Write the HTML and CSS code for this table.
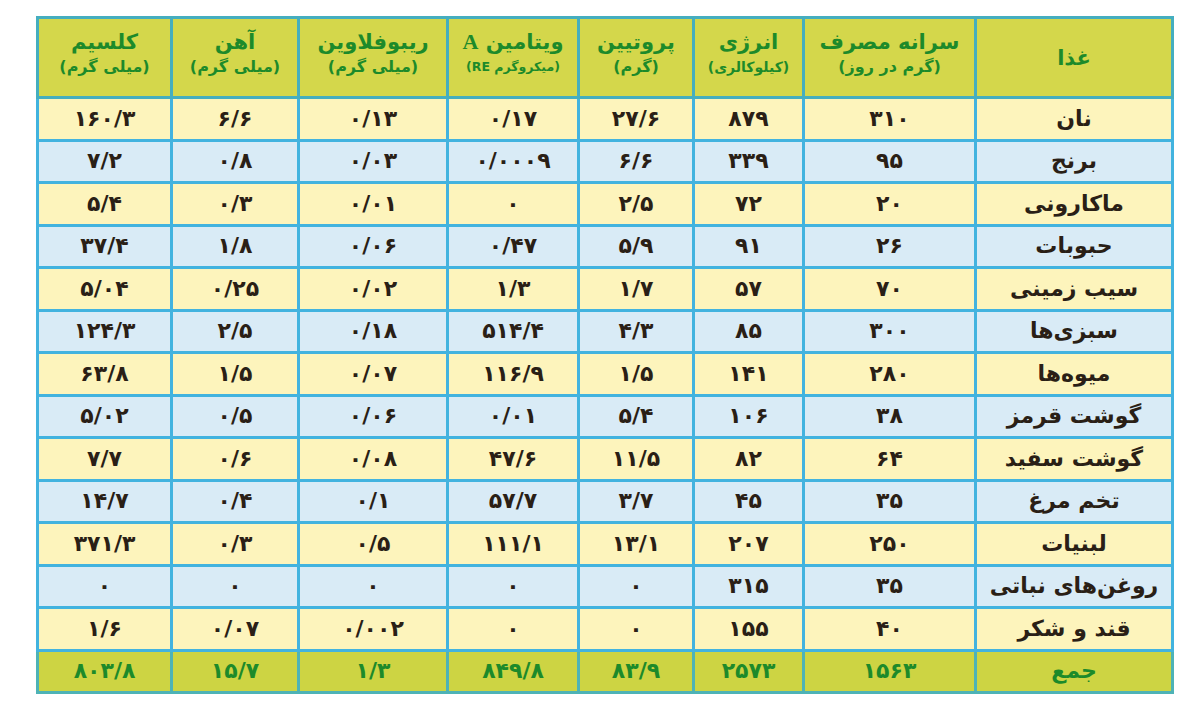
FILE: index.html
```html
<!DOCTYPE html>
<html lang="fa" dir="rtl">
<head>
<meta charset="utf-8">
<title>جدول ارزش غذایی</title>
<link rel="stylesheet" href="styles.css">
</head>
<body>
<div class="page">
<table class="nutri">
  <colgroup>
    <col class="c-food"><col class="c-use"><col class="c-energy"><col class="c-protein"><col class="c-vita"><col class="c-ribo"><col class="c-iron"><col class="c-calc">
  </colgroup>
  <thead>
    <tr class="head">
      <th><span class="t">غذا</span></th>
      <th><span class="t">سرانه مصرف</span><span class="s">(گرم در روز)</span></th>
      <th><span class="t">انرژی</span><span class="s xs">(کیلوکالری)</span></th>
      <th><span class="t">پروتیین</span><span class="s">(گرم)</span></th>
      <th><span class="t">ویتامین <span class="latin">A</span></span><span class="s xxs">(میکروگرم RE)</span></th>
      <th><span class="t">ریبوفلاوین</span><span class="s">(میلی گرم)</span></th>
      <th><span class="t">آهن</span><span class="s">(میلی گرم)</span></th>
      <th><span class="t">کلسیم</span><span class="s">(میلی گرم)</span></th>
    </tr>
  </thead>
  <tbody>
    <tr class="y"><td>نان</td><td>۳۱۰</td><td>۸۷۹</td><td>۲۷/۶</td><td>۰/۱۷</td><td>۰/۱۳</td><td>۶/۶</td><td>۱۶۰/۳</td></tr>
    <tr class="b"><td>برنج</td><td>۹۵</td><td>۳۳۹</td><td>۶/۶</td><td>۰/۰۰۰۹</td><td>۰/۰۳</td><td>۰/۸</td><td>۷/۲</td></tr>
    <tr class="y"><td>ماکارونی</td><td>۲۰</td><td>۷۲</td><td>۲/۵</td><td>۰</td><td>۰/۰۱</td><td>۰/۳</td><td>۵/۴</td></tr>
    <tr class="b"><td>حبوبات</td><td>۲۶</td><td>۹۱</td><td>۵/۹</td><td>۰/۴۷</td><td>۰/۰۶</td><td>۱/۸</td><td>۳۷/۴</td></tr>
    <tr class="y"><td>سیب زمینی</td><td>۷۰</td><td>۵۷</td><td>۱/۷</td><td>۱/۳</td><td>۰/۰۲</td><td>۰/۲۵</td><td>۵/۰۴</td></tr>
    <tr class="b"><td>سبزی‌ها</td><td>۳۰۰</td><td>۸۵</td><td>۴/۳</td><td>۵۱۴/۴</td><td>۰/۱۸</td><td>۲/۵</td><td>۱۲۴/۳</td></tr>
    <tr class="y"><td>میوه‌ها</td><td>۲۸۰</td><td>۱۴۱</td><td>۱/۵</td><td>۱۱۶/۹</td><td>۰/۰۷</td><td>۱/۵</td><td>۶۳/۸</td></tr>
    <tr class="b"><td>گوشت قرمز</td><td>۳۸</td><td>۱۰۶</td><td>۵/۴</td><td>۰/۰۱</td><td>۰/۰۶</td><td>۰/۵</td><td>۵/۰۲</td></tr>
    <tr class="y"><td>گوشت سفید</td><td>۶۴</td><td>۸۲</td><td>۱۱/۵</td><td>۴۷/۶</td><td>۰/۰۸</td><td>۰/۶</td><td>۷/۷</td></tr>
    <tr class="b"><td>تخم مرغ</td><td>۳۵</td><td>۴۵</td><td>۳/۷</td><td>۵۷/۷</td><td>۰/۱</td><td>۰/۴</td><td>۱۴/۷</td></tr>
    <tr class="y"><td>لبنیات</td><td>۲۵۰</td><td>۲۰۷</td><td>۱۳/۱</td><td>۱۱۱/۱</td><td>۰/۵</td><td>۰/۳</td><td>۳۷۱/۳</td></tr>
    <tr class="b"><td>روغن‌های نباتی</td><td>۳۵</td><td>۳۱۵</td><td>۰</td><td>۰</td><td>۰</td><td>۰</td><td>۰</td></tr>
    <tr class="y"><td>قند و شکر</td><td>۴۰</td><td>۱۵۵</td><td>۰</td><td>۰</td><td>۰/۰۰۲</td><td>۰/۰۷</td><td>۱/۶</td></tr>
    <tr class="total"><td>جمع</td><td>۱۵۶۳</td><td>۲۵۷۳</td><td>۸۳/۹</td><td>۸۴۹/۸</td><td>۱/۳</td><td>۱۵/۷</td><td>۸۰۳/۸</td></tr>
  </tbody>
</table>
</div>
</body>
</html>
```

FILE: styles.css
```css
html, body {
  margin: 0;
  padding: 0;
  background: #ffffff;
}

.page {
  width: 1200px;
  height: 721px;
  padding-top: 16px;
  padding-left: 36px;
  box-sizing: border-box;
  direction: ltr;
}

.nutri {
  direction: rtl;
  border-collapse: collapse;
  table-layout: fixed;
  width: 1135px;
  font-family: "DejaVu Sans", "Noto Sans", sans-serif;
  font-weight: bold;
  color: #2a1f16;
  border: 3px solid #3fb2d8;
}

.c-food { width: 197px; }
.c-use { width: 172px; }
.c-energy { width: 110px; }
.c-protein { width: 115px; }
.c-vita { width: 131px; }
.c-ribo { width: 149px; }
.c-iron { width: 127px; }
.c-calc { width: 134px; }

.nutri th,
.nutri td {
  border: 3px solid #42b3df;
  text-align: center;
  vertical-align: middle;
  padding: 0;
}

.head th {
  height: 77px;
  background: #d4d74b;
  color: #1d8a2a;
  border-color: #45aebf;
}

.head .t {
  display: block;
  font-size: 21px;
  line-height: 30px;
}

.head .latin {
  font-family: "Liberation Serif", serif;
  font-size: 22px;
}

.head .s {
  display: block;
  font-size: 16px;
  line-height: 20px;
  margin-bottom: 12px;
}

.head .s.xs {
  font-size: 14px;
}

.head .s.xxs {
  font-size: 12.5px;
}

.nutri td {
  height: 39.5px;
  font-size: 22px;
  line-height: 24px;
}

.y td { background: #fdf4bc; }
.b td { background: #d9ebf6; }

.total td {
  background: #cdd443;
  color: #1d8a2a;
  border-color: #4eb3b6;
}
```
